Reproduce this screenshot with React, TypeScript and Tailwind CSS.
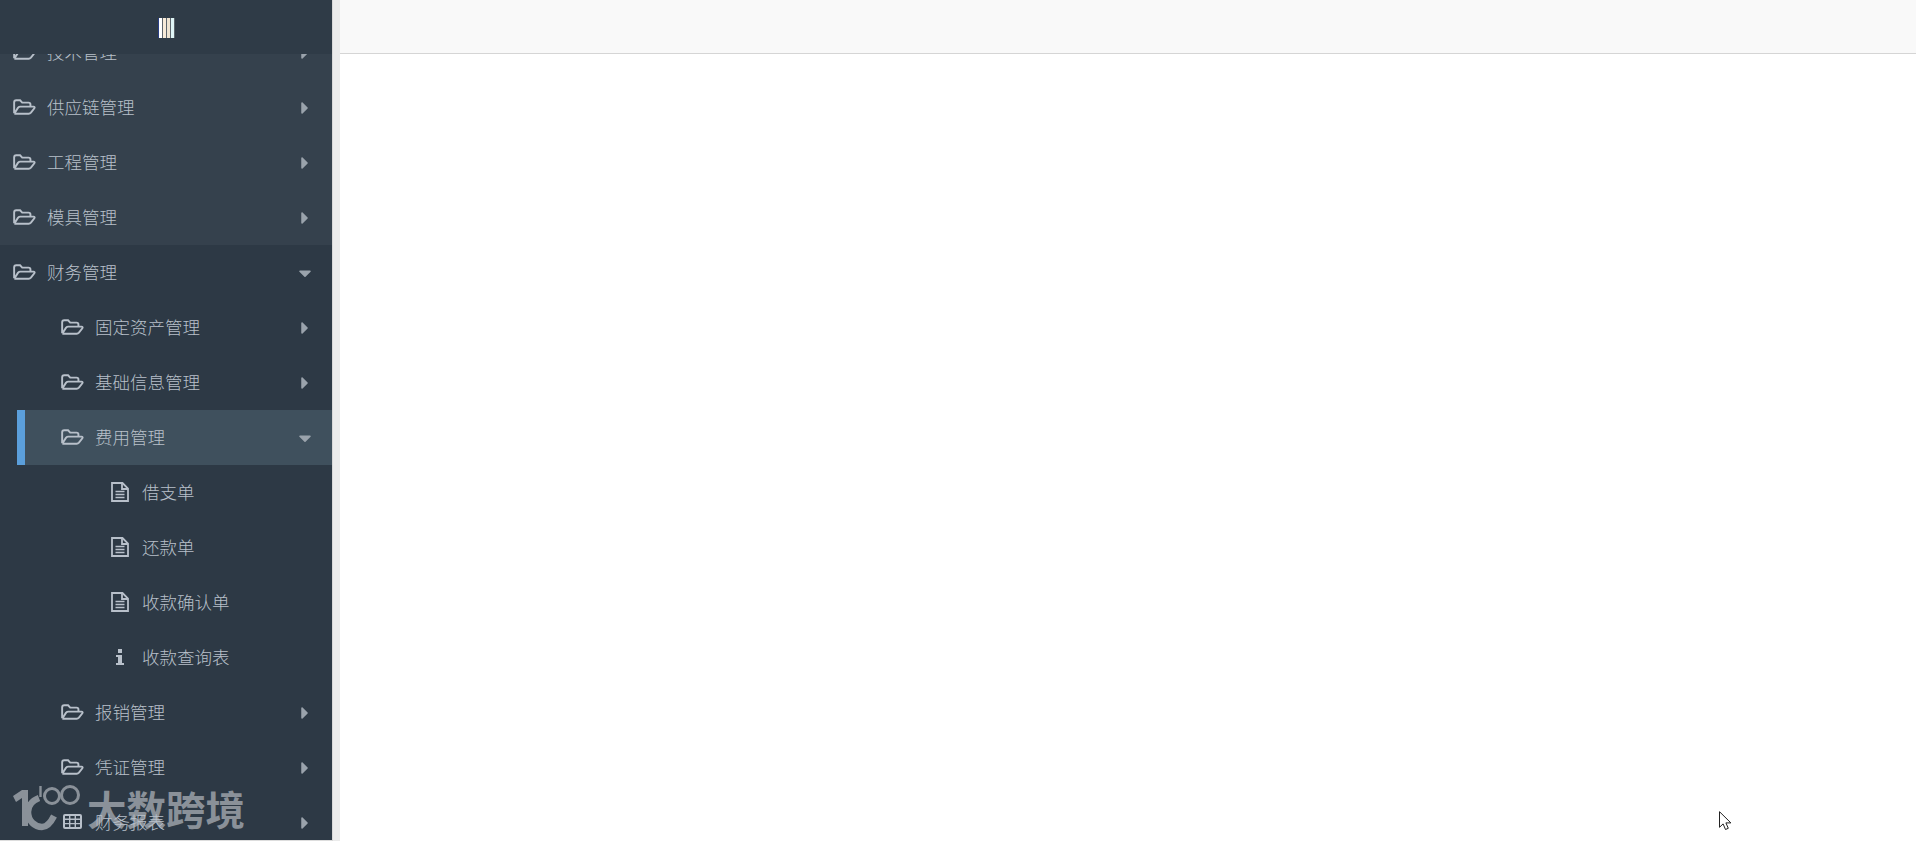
import { FaCaretDown, FaCaretRight } from "react-icons/fa";

type Row = {
  label: string;
  level: 0 | 1 | 2;
  icon?: "folder" | "file" | "info" | "table";
  open?: boolean;
  active?: boolean;
  tint?: boolean;
};

const rows: Row[] = [
  { label: "技术管理", level: 0, tint: true },
  { label: "供应链管理", level: 0, tint: true },
  { label: "工程管理", level: 0, tint: true },
  { label: "模具管理", level: 0, tint: true },
  { label: "财务管理", level: 0, open: true },
  { label: "固定资产管理", level: 1 },
  { label: "基础信息管理", level: 1 },
  { label: "费用管理", level: 1, open: true, active: true },
  { label: "借支单", level: 2, icon: "file" },
  { label: "还款单", level: 2, icon: "file" },
  { label: "收款确认单", level: 2, icon: "file" },
  { label: "收款查询表", level: 2, icon: "info" },
  { label: "报销管理", level: 1 },
  { label: "凭证管理", level: 1 },
  { label: "财务报表", level: 1, icon: "table" },
];

function RowIcon({ icon }: { icon: Row["icon"] }) {
  if (icon === "file") {
    return (
      <svg width="18" height="20" viewBox="0 0 18 20" fill="none" stroke="currentColor" strokeWidth="1.8">
        <path d="M1 1h10.5L17 6.5V19H1z" />
        <path d="M11 1v6h6" />
        <path d="M4.5 9.5h9M4.5 12.5h9M4.5 15.5h9" strokeWidth="1.5" />
      </svg>
    );
  }
  if (icon === "info") {
    return (
      <svg width="8" height="16" viewBox="0 0 8 16" fill="currentColor">
        <path d="M2 0h4v4H2zM0 6h6v8h2v2H0v-2h2V8H0z" />
      </svg>
    );
  }
  if (icon === "table") {
    return (
      <svg width="19" height="15" viewBox="0 0 19 15" fill="none" stroke="currentColor">
        <rect x="1" y="1" width="17" height="13" rx="1" strokeWidth="2" />
        <path d="M1 5.3h17M1 9.6h17M6.7 1v13M12.3 1v13" strokeWidth="1.4" />
      </svg>
    );
  }
  return (
    <svg width="23" height="16" viewBox="0 0 24 16" fill="none" stroke="currentColor" strokeWidth="2">
      <path d="M1.2 14.5V3.2C1.2 2 2.2 1 3.4 1h4l2.2 2.4h6.6c1.2 0 2 .9 2 2v2.2" />
      <path d="M1.4 15h15c1 0 1.7-.4 2.3-1.1l3.6-4.6c.6-.8.2-1.7-.9-1.7H7.6c-1 0-1.7.4-2.3 1.1L1.6 14.4" />
    </svg>
  );
}

function MenuRow({ row }: { row: Row }) {
  const pad = row.level === 0 ? "pl-[12px]" : row.level === 1 ? "pl-[60px]" : "pl-[108px]";
  return (
    <div
      className={`flex h-[55px] shrink-0 items-center text-[17.5px] text-[#b8c0ca] ${pad} ${
        row.active ? "ml-[17px] border-l-[8px] border-[#5b9fdb] bg-[#3f505d] !pl-[35px]" : ""
      } ${row.tint ? "bg-[#35414d]" : ""}`}
    >
      <span className="flex w-[24px] -translate-y-[1px] justify-center">
        <RowIcon icon={row.icon} />
      </span>
      <span className={row.level === 2 ? "ml-[10px]" : "ml-[11px]"}>{row.label}</span>
      {row.level < 2 && (
        <span className="ml-auto mr-[19px] flex w-[16px] justify-center text-[#9aa3ac]">
          {row.open ? <FaCaretDown className="text-[20px]" /> : <FaCaretRight className="text-[20px]" />}
        </span>
      )}
    </div>
  );
}

function Watermark() {
  return (
    <div className="absolute bottom-[8px] left-[13px] flex items-end text-[#8a9199] pointer-events-none">
      <svg width="68" height="47" viewBox="0 0 68 47" fill="none" stroke="currentColor">
        <path d="M0 11L9 5h6v36H9V13l-6 4z" fill="currentColor" stroke="none" />
        <path d="M26 13C18 16 15 22 15 27c0 9 7 15 14 15 5 0 9-5 12-11" strokeWidth="6.5" />
        <path d="M27.5 1v11" strokeWidth="2.4" />
        <circle cx="39" cy="11" r="7.5" strokeWidth="3" />
        <circle cx="57" cy="10" r="8.5" strokeWidth="3" />
      </svg>
      <span className="mb-[1px] ml-[6px] text-[39.5px] font-bold leading-[46px]">大数跨境</span>
    </div>
  );
}

export default function App() {
  return (
    <div
      className="relative flex h-[841px] w-full overflow-hidden bg-white"
      style={{ fontFamily: '"Noto Sans CJK SC", "Liberation Sans", sans-serif' }}
    >
      <aside className="relative flex w-[332px] shrink-0 flex-col overflow-hidden border-b border-[#dddddd] bg-[#2d3945] font-light">
        <header className="relative z-20 flex h-[54px] shrink-0 items-center justify-center bg-[#2f3b47] pt-[2px]">
          <svg width="17" height="20" viewBox="0 0 17 20">
            <rect width="17" height="20" fill="#5c646b" />
            <rect x="0" width="1" height="20" fill="#2a3f86" />
            <rect x="1" width="3" height="20" fill="#ffffff" />
            <rect x="5" width="3" height="20" fill="#f7ead9" />
            <rect x="9" width="3" height="20" fill="#efe4d2" />
            <rect x="13" width="3" height="20" fill="#dff5f7" />
          </svg>
        </header>
        <Watermark />
        <nav className="relative z-10 -mt-[29px] flex flex-col">
          {rows.map((r) => (
            <MenuRow key={r.label} row={r} />
          ))}
        </nav>
      </aside>
      <div className="w-[8px] shrink-0 border-l border-[#d8d8d8] bg-[#ebebeb]" />
      <main className="min-w-0 flex-1">
        <div className="h-[54px] border-b border-[#d5d5d5] bg-[#f9f9f9]" />
      </main>
      <svg className="absolute left-[1719px] top-[811px]" width="13" height="20" viewBox="0 0 13 20" fill="#fff" stroke="#222" strokeWidth="1">
        <path d="M.5.7v15.6l3.6-3.4 2.4 5.6 2.8-1.2-2.4-5.4h5z" />
      </svg>
    </div>
  );
}
